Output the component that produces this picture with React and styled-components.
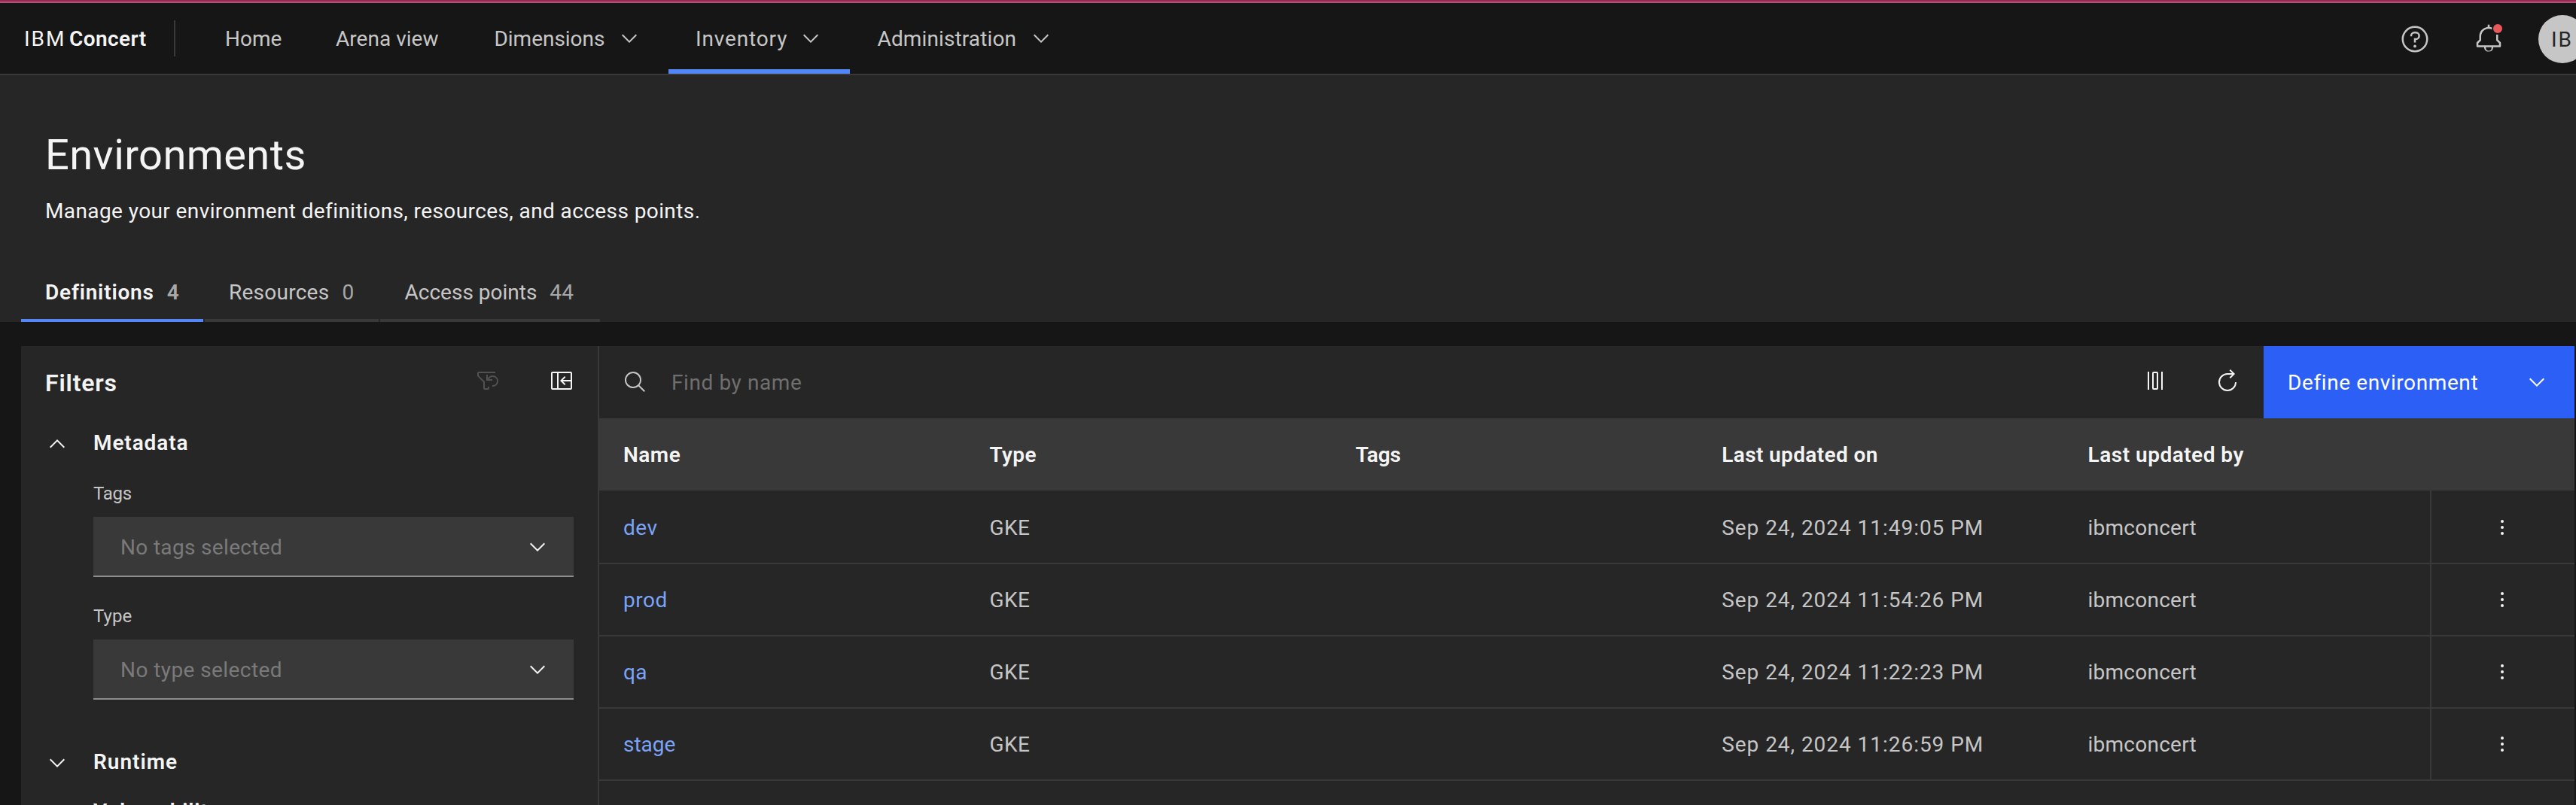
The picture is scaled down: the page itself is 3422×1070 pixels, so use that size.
import React from "react";
import styled, { createGlobalStyle } from "styled-components";

const c = {
  bg: "#161616",
  layer: "#262626",
  layerAccent: "#393939",
  text: "#f4f4f4",
  textSecondary: "#c6c6c6",
  textMuted: "#a8a8a8",
  placeholder: "#6f6f6f",
  disabled: "#525252",
  focus: "#5387f7",
  link: "#7ba3f6",
  primary: "#2c5ff6",
};

const GlobalStyle = createGlobalStyle`
  *, *::before, *::after { box-sizing: border-box; }
  body {
    margin: 0;
    background: ${c.bg};
    color: ${c.text};
    font-family: Roboto, "Liberation Sans", sans-serif;
    font-size: 28px;
    line-height: 36px;
    overflow: hidden;
  }
  svg { display: block; flex: none; }
`;

const Page = styled.div`
  display: flex;
  flex-direction: column;
  height: 1070px;
  overflow: hidden;
  white-space: nowrap;
`;

/* letter-spacing and a small optical shift vary from label to label */
const Label = styled.span`
  margin-top: 2px;
  letter-spacing: ${(p) => p.$track ?? 0.2}px;
  margin-left: ${(p) => p.$shift ?? 0}px;
  font-weight: ${(p) => (p.$bold ? 600 : "inherit")};
  color: ${(p) => p.$color ?? "inherit"};
`;

/* ---------- header ---------- */
const Header = styled.header`
  display: flex;
  align-items: stretch;
  flex: none;
  height: 96px;
  border-bottom: 2px solid ${c.layerAccent};
`;

const TopStripe = styled.div`
  flex: none;
  height: 4px;
  background: #98284f;
  border-bottom: 2px solid #b25377;
`;

const Brand = styled.div`
  display: flex;
  align-items: center;
  width: 262px;
  padding-left: 32px;
`;

const BrandDivider = styled.i`
  width: 2px;
  height: 48px;
  margin-left: auto;
  margin-right: 29px;
  background: ${c.layerAccent};
`;

const NavItem = styled.a`
  display: flex;
  align-items: center;
  justify-content: space-between;
  width: ${(p) => p.$width}px;
  padding: 0 36px;
  color: ${c.textSecondary};
  box-shadow: ${(p) => (p.$active ? `inset 0 -6px ${c.focus}` : "none")};
`;

const HeaderActions = styled.div`
  display: flex;
  align-items: center;
  margin: 2px -14px 0 auto;
  color: ${c.textSecondary};
`;

const BellButton = styled.span`
  margin: 0 46px 0 58px;
`;

const Avatar = styled.span`
  display: flex;
  align-items: center;
  width: 64px;
  height: 64px;
  padding-left: 17px;
  border-radius: 50%;
  background: ${c.textSecondary};
  color: #262626;
`;

/* ---------- page title and tabs ---------- */
const Hero = styled.section`
  display: flex;
  flex-direction: column;
  flex: none;
  height: 328px;
  padding: 74px 28px 0;
  background: ${c.layer};
`;

const Title = styled.h1`
  margin: 0 0 23px 32px;
  font-size: 56px;
  font-weight: 400;
  line-height: 64px;
  letter-spacing: 0.42px;
`;

const Subtitle = styled.p`
  margin: 0 0 0 32px;
  line-height: 40px;
  letter-spacing: 0.4px;
`;

const Tabs = styled.nav`
  display: flex;
  gap: 2px;
  margin-top: auto;
`;

const Tab = styled.a`
  display: flex;
  align-items: center;
  gap: 17px;
  width: ${(p) => p.$width}px;
  height: 80px;
  padding: 4px 0 0 32px;
  font-weight: ${(p) => (p.$active ? 600 : 400)};
  color: ${(p) => (p.$active ? c.text : c.textSecondary)};
  border-bottom: 4px solid ${(p) => (p.$active ? c.focus : c.layerAccent)};
`;

/* ---------- body ---------- */
const Body = styled.main`
  display: flex;
  flex: 1;
  min-height: 0;
  margin: 32px 2px 0 28px;
  background: ${c.layer};
`;

const Sidebar = styled.aside`
  flex: none;
  width: 768px;
  padding: 0 32px;
  border-right: 2px solid ${c.layerAccent};
  overflow: hidden;
`;

const SidebarHead = styled.div`
  display: flex;
  align-items: center;
  height: 92px;
  margin-bottom: 20px;
`;

const SidebarTitle = styled.h2`
  margin: 6px auto 0 0;
  font-size: 32px;
  font-weight: 600;
  letter-spacing: 0.82px;
`;

const ResetIcon = styled.span`
  color: ${c.disabled};
`;

const CloseIcon = styled.span`
  margin-left: 66px;
`;

const SectionHead = styled.h3`
  display: flex;
  align-items: center;
  gap: 32px;
  height: 36px;
  margin: 0;
  font-size: 28px;
  font-weight: 600;
`;

const SectionTitle = styled.span`
  margin-top: -3px;
  letter-spacing: ${(p) => p.$track}px;
`;

const SectionBody = styled.div`
  padding: 0 0 66px 64px;
`;

const Field = styled.div`
  padding-top: ${(p) => p.$top}px;
`;

const FieldLabel = styled.div`
  height: 47px;
  font-size: 24px;
  line-height: 32px;
  letter-spacing: ${(p) => p.$track}px;
  color: ${c.textSecondary};
`;

const Select = styled.div`
  display: flex;
  align-items: center;
  justify-content: space-between;
  height: 80px;
  padding: 2px 32px 0 36px;
  background: ${c.layerAccent};
  border-bottom: 2px solid #8d8d8d;
`;

const Subsection = styled.div`
  margin-top: 29px;
  padding-left: 64px;
  font-weight: 600;
  letter-spacing: 0.8px;
`;

/* ---------- table ---------- */
const TablePane = styled.section`
  flex: 1;
  min-width: 0;
`;

const Toolbar = styled.div`
  display: flex;
  align-items: center;
  height: 96px;
  padding-left: 32px;
  color: ${c.text};
`;

const SearchField = styled.div`
  display: flex;
  align-items: center;
  flex: 1;
  gap: 32px;
  color: ${c.textSecondary};
`;

const ToolIcon = styled.span`
  margin: -4px ${(p) => p.$right}px 0 0;
`;

const PrimaryButton = styled.div`
  display: flex;
  align-items: center;
  justify-content: space-between;
  width: 413px;
  height: 96px;
  padding: 0 34px 0 32px;
  background: ${c.primary};
  color: #fff;
`;

const Row = styled.div`
  display: grid;
  grid-template-columns: repeat(5, 486.4px) 192px;
  height: ${(p) => (p.$first ? 98 : 96)}px;
  border-bottom: ${(p) => (p.$head ? "none" : `2px solid ${c.layerAccent}`)};
  background: ${(p) => (p.$head ? c.layerAccent : "transparent")};
  font-weight: ${(p) => (p.$head ? 600 : 400)};
  color: ${(p) => (p.$head ? c.text : c.textSecondary)};
`;

const Cell = styled.div`
  display: flex;
  align-items: center;
  padding: ${(p) => (p.$first ? 2 : 0)}px 0 0 32px;
`;

const MenuCell = styled.div`
  display: flex;
  align-items: center;
  padding: ${(p) => (p.$first ? 2 : 0)}px 0 0 78px;
  border-left: 2px solid ${c.layerAccent};
  color: ${c.text};
`;

/* ---------- icons ---------- */
const Icon = ({ size = 32, children }) => (
  <svg width={size} height={size} viewBox="0 0 32 32" fill="currentColor">
    {children}
  </svg>
);

const ChevronDown = () => (
  <Icon><path d="M16 22L6 12 7.4 10.6 16 19.2 24.6 10.6 26 12z" /></Icon>
);
const ChevronUp = () => (
  <Icon><path d="M16 10L26 20 24.6 21.4 16 12.8 7.4 21.4 6 20z" /></Icon>
);
const HelpIcon = () => (
  <Icon size={40}>
    <path d="M16,2A14,14,0,1,0,30,16,14,14,0,0,0,16,2Zm0,26A12,12,0,1,1,28,16,12,12,0,0,1,16,28Z" />
    <circle cx="16" cy="23.5" r="1.5" />
    <path d="M17,8H15.5A4.49,4.49,0,0,0,11,12.49V13h2v-.5A2.5,2.5,0,0,1,15.5,10H17a2.5,2.5,0,0,1,0,5H15v4.5h2V17a4.5,4.5,0,0,0,0-9Z" />
  </Icon>
);
const BellIcon = () => (
  <Icon size={40}>
    <path d="M28.7071,19.293,26,16.5859V11.2h-2V17a1,1,0,0,0,.2929.707L27,20.4141V22.6H5V20.4141l2.707-2.7071A1,1,0,0,0,8,17V13a7.9851,7.9851,0,0,1,11.4-7.2V3.6472a9.8965,9.8965,0,0,0-2.4-.5969V.6H15V3.0508A10.0136,10.0136,0,0,0,6,13v3.5859L3.2929,19.293A1,1,0,0,0,3,20v3.6a1,1,0,0,0,1,1h7.2v.7768a4.9,4.9,0,0,0,9.6,0V24.6H28a1,1,0,0,0,1-1V20A1,1,0,0,0,28.7071,19.293ZM19,25.4a3,3,0,0,1-6,0V24.6h6Z" />
    <circle cx="25.6" cy="4.8" r="4.8" fill="#e8595c" />
  </Icon>
);
const FilterResetIcon = () => (
  <Icon>
    <path d="M22.5,9A7.4522,7.4522,0,0,0,16,12.792V8H14v8h8V14H17.6167A5.4941,5.4941,0,1,1,22.5,22H22v2h.5a7.5,7.5,0,0,0,0-15Z" />
    <path d="M26,6H4V9.171l7.4142,7.4143L12,17.171V26h4V24h2v2a2,2,0,0,1-2,2H12a2,2,0,0,1-2-2V18L2.5858,10.5853A2,2,0,0,1,2,9.171V6A2,2,0,0,1,4,4H26Z" />
  </Icon>
);
const PanelCloseIcon = () => (
  <Icon>
    <path d="M28,4H4c-1.1,0-2,.9-2,2v20c0,1.1.9,2,2,2h24c1.1,0,2-.9,2-2V6c0-1.1-.9-2-2-2ZM10,26H4V6h6v20ZM28,15H17.8l3.6-3.6-1.4-1.4-6,6,6,6,1.4-1.4-3.6-3.6h10.2v9H12V6h16v9Z" />
  </Icon>
);
const SearchIcon = () => (
  <Icon>
    <path d="M29,27.5859l-7.5521-7.5521a11.0177,11.0177,0,1,0-1.4141,1.4141L27.5859,29ZM4,13a9,9,0,1,1,9,9A9.01,9.01,0,0,1,4,13Z" />
  </Icon>
);
const ColumnIcon = () => (
  <Icon>
    <path d="M6 4h2v24H6zM24 4h2v24h-2z" />
    <path d="M18,6V26H14V6h4m0-2H14a2,2,0,0,0-2,2V26a2,2,0,0,0,2,2h4a2,2,0,0,0,2-2V6a2,2,0,0,0-2-2Z" />
  </Icon>
);
const RestartIcon = () => (
  <Icon>
    <path d="M26,18A10,10,0,1,1,16,8h6.1822l-3.5844,3.5859L20,13l6-6L20,1,18.5977,2.414,22.1851,6H16A12,12,0,1,0,28,18Z" />
  </Icon>
);
const OverflowIcon = () => (
  <Icon>
    <circle cx="16" cy="8" r="2" />
    <circle cx="16" cy="16" r="2" />
    <circle cx="16" cy="24" r="2" />
  </Icon>
);

const nav = [
  { label: "Home", width: 148, track: 0, shift: 1 },
  { label: "Arena view", width: 210, track: 0.03, shift: 0 },
  { label: "Dimensions", width: 268, track: -0.03, menu: true, shift: 0.5 },
  { label: "Inventory", width: 241, track: 0.85, menu: true, active: true },
  { label: "Administration", width: 306, track: 0.12, menu: true, shift: 0.5 },
];

const tabs = [
  { label: "Definitions", count: 4, width: 242, track: 0.79, active: true },
  { label: "Resources", count: 0, width: 231, track: 0.25, shift: 0 },
  { label: "Access points", count: 44, width: 292, track: 0, shift: 0.5 },
];

const columns = [
  ["Name", 0.5],
  ["Type", 0.4],
  ["Tags", -0.2],
  ["Last updated on", 0.39],
  ["Last updated by", 0.5],
];

const rows = [
  ["dev", "Sep 24, 2024 11:49:05 PM", 0.5],
  ["prod", "Sep 24, 2024 11:54:26 PM", 0.5],
  ["qa", "Sep 24, 2024 11:22:23 PM", 0.3],
  ["stage", "Sep 24, 2024 11:26:59 PM", 0],
];

export default function App() {
  return (
    <Page>
      <GlobalStyle />
      <TopStripe />
      <Header>
        <Brand>
          <Label $track={2}>IBM</Label>
          <Label $bold $track={0.4} $shift={4.5}>Concert</Label>
          <BrandDivider />
        </Brand>
        {nav.map((n) => (
          <NavItem key={n.label} $width={n.width} $active={n.active}>
            <Label $track={n.track} $shift={n.shift}>{n.label}</Label>
            {n.menu && <ChevronDown />}
          </NavItem>
        ))}
        <HeaderActions>
          <HelpIcon />
          <BellButton><BellIcon /></BellButton>
          <Avatar><Label $track={2}>IB</Label></Avatar>
        </HeaderActions>
      </Header>

      <Hero>
        <Title>Environments</Title>
        <Subtitle>Manage your environment definitions, resources, and access points.</Subtitle>
        <Tabs>
          {tabs.map((t) => (
            <Tab key={t.label} $width={t.width} $active={t.active}>
              <Label $track={t.track} $shift={t.shift}>{t.label}</Label>
              <Label $track={0.26} $color={c.textMuted}>{t.count}</Label>
            </Tab>
          ))}
        </Tabs>
      </Hero>

      <Body>
        <Sidebar>
          <SidebarHead>
            <SidebarTitle>Filters</SidebarTitle>
            <ResetIcon><FilterResetIcon /></ResetIcon>
            <CloseIcon><PanelCloseIcon /></CloseIcon>
          </SidebarHead>
          <SectionHead>
            <ChevronUp />
            <SectionTitle $track={0.9}>Metadata</SectionTitle>
          </SectionHead>
          <SectionBody>
            <Field $top={32}>
              <FieldLabel $track={-0.3}>Tags</FieldLabel>
              <Select>
                <Label $track={0.33} $color="#7a7a7a">No tags selected</Label>
                <ChevronDown />
              </Select>
            </Field>
            <Field $top={36}>
              <FieldLabel $track={0.1}>Type</FieldLabel>
              <Select>
                <Label $track={0.42} $color="#7a7a7a">No type selected</Label>
                <ChevronDown />
              </Select>
            </Field>
          </SectionBody>
          <SectionHead>
            <ChevronDown />
            <SectionTitle $track={0.99}>Runtime</SectionTitle>
          </SectionHead>
          <Subsection>Vulnerability</Subsection>
        </Sidebar>

        <TablePane>
          <Toolbar>
            <SearchField>
              <SearchIcon />
              <Label $track={0.59} $color={c.placeholder}>Find by name</Label>
            </SearchField>
            <ToolIcon $right={64}><ColumnIcon /></ToolIcon>
            <ToolIcon $right={32}><RestartIcon /></ToolIcon>
            <PrimaryButton>
              <Label $track={0.6}>Define environment</Label>
              <ChevronDown />
            </PrimaryButton>
          </Toolbar>
          <Row $head>
            {columns.map(([name, track]) => (
              <Cell key={name}><Label $track={track}>{name}</Label></Cell>
            ))}
          </Row>
          {rows.map(([name, date, track], i) => (
            <Row key={name} $first={i === 0}>
              <Cell $first={i === 0}><Label $track={track} $color={c.link}>{name}</Label></Cell>
              <Cell $first={i === 0}><Label $track={0.43}>GKE</Label></Cell>
              <Cell />
              <Cell $first={i === 0}><Label $track={0.96}>{date}</Label></Cell>
              <Cell $first={i === 0}><Label $track={0.24}>ibmconcert</Label></Cell>
              <MenuCell $first={i === 0}><OverflowIcon /></MenuCell>
            </Row>
          ))}
        </TablePane>
      </Body>
    </Page>
  );
}
